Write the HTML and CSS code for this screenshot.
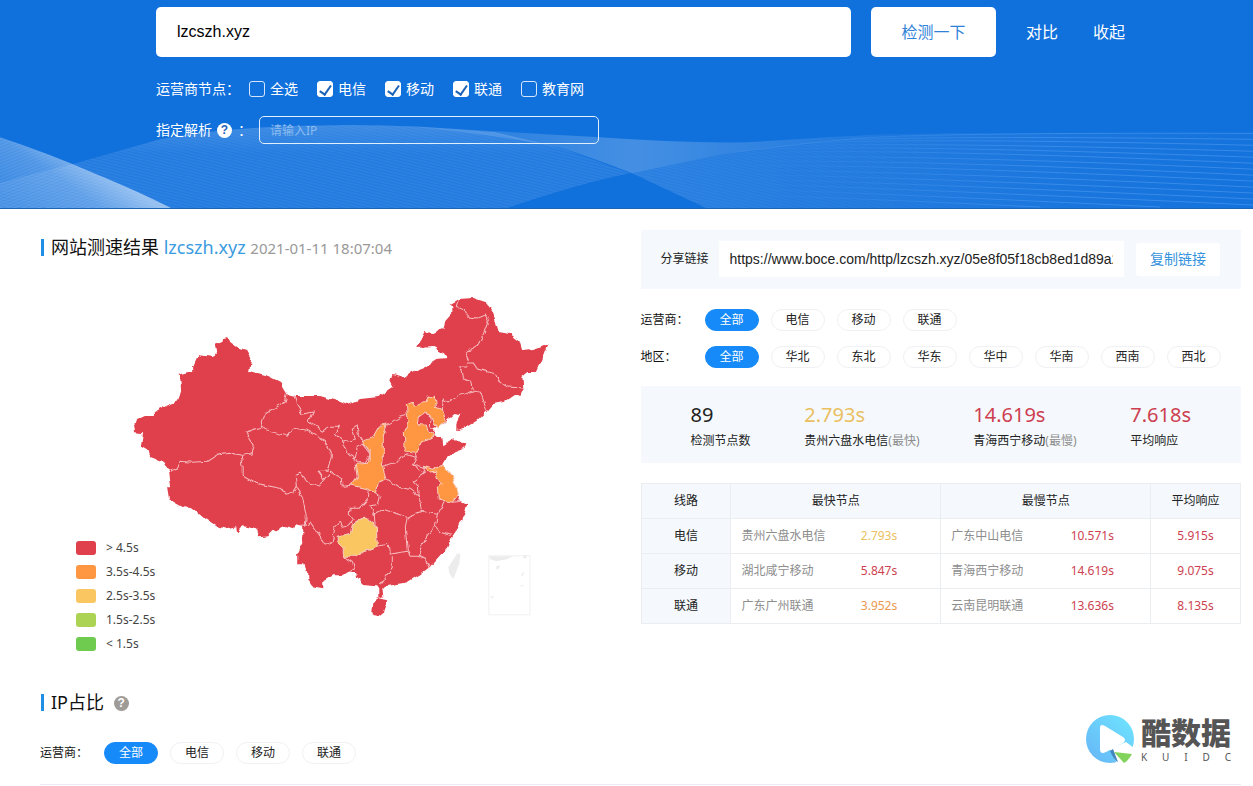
FILE: index.html
```html
<!DOCTYPE html>
<html lang="zh-CN">
<head>
<meta charset="utf-8">
<meta name="viewport" content="width=device-width, initial-scale=1">
<title>网站测速结果</title>
<link rel="stylesheet" href="styles.css">
</head>
<body>
<header class="hero">
  <svg class="waves" viewBox="0 0 1253 209" preserveAspectRatio="none" aria-hidden="true">
    <defs>
      <pattern id="fine" width="5" height="3" patternUnits="userSpaceOnUse" patternTransform="rotate(14)"><path d="M0 1H5" stroke="#8cc0ff" stroke-opacity=".2"/></pattern>
      <pattern id="steep" width="5" height="3" patternUnits="userSpaceOnUse" patternTransform="rotate(-22)"><path d="M0 1H5" stroke="#b9d8ff" stroke-opacity=".22"/></pattern>
      <linearGradient id="edge" x1="50" y1="230" x2="94" y2="165" gradientUnits="userSpaceOnUse"><stop offset="0" stop-color="#fff" stop-opacity=".14"/><stop offset=".6" stop-color="#fff" stop-opacity=".25"/><stop offset="1" stop-color="#fff" stop-opacity=".5"/></linearGradient>
      <linearGradient id="mid" x1="0" y1="125" x2="0" y2="209" gradientUnits="userSpaceOnUse"><stop offset="0" stop-color="#fff" stop-opacity=".18"/><stop offset=".35" stop-color="#fff" stop-opacity=".07"/><stop offset="1" stop-color="#fff" stop-opacity=".07"/></linearGradient>
      <linearGradient id="fold" x1="400" y1="0" x2="920" y2="0" gradientUnits="userSpaceOnUse"><stop offset="0" stop-color="#fff" stop-opacity=".06"/><stop offset=".45" stop-color="#fff" stop-opacity=".22"/><stop offset="1" stop-color="#fff" stop-opacity=".03"/></linearGradient>
      <linearGradient id="right" x1="640" y1="0" x2="1253" y2="0" gradientUnits="userSpaceOnUse"><stop offset="0" stop-color="#fff" stop-opacity=".1"/><stop offset="1" stop-color="#fff" stop-opacity=".02"/></linearGradient>
      <linearGradient id="fade" x1="640" y1="0" x2="1100" y2="0" gradientUnits="userSpaceOnUse"><stop offset="0" stop-color="#fff"/><stop offset="1" stop-color="#fff" stop-opacity="0"/></linearGradient>
      <linearGradient id="appear" x1="720" y1="0" x2="1050" y2="0" gradientUnits="userSpaceOnUse"><stop offset="0" stop-color="#fff" stop-opacity="0"/><stop offset="1" stop-color="#fff"/></linearGradient>
      <mask id="fadeMask"><rect width="1253" height="209" fill="url(#fade)"/></mask>
      <mask id="appearMask"><rect width="1253" height="209" fill="url(#appear)"/></mask>
    </defs>
    <path d="M0 184L32 175L72 165L160 140Q230 127 320 126Q400 124 495 133L560 148L630 174Q580 184 507 209H0Z" fill="url(#mid)"/>
    <path d="M0 184L32 175L72 165L160 140Q230 127 320 126Q400 124 495 133L560 148L630 174Q580 184 507 209H0Z" fill="url(#fine)"/>
    <path d="M400 126Q495 132 600 138Q680 144 746 143Q826 138 880 135L940 134Q826 140 722 155L632 174Q590 158 560 148Q490 134 400 126Z" fill="url(#fold)"/>
    <path d="M632 174L722 155Q830 138 946 134H1253V209H706Z" fill="url(#right)"/>
    <path d="M632 174L722 155Q830 138 946 134H1253V209H706Z" fill="url(#fine)" mask="url(#fadeMask)"/>
    <g fill="none" stroke="#4d9bf2" stroke-opacity=".6" mask="url(#appearMask)">
      <path d="M850 139Q950 133 1253 134"/><path d="M830 141Q950 136 1253 140"/><path d="M800 144Q930 138 1253 146"/>
      <path d="M780 147Q910 142 1253 152"/><path d="M760 150Q900 145 1253 158"/><path d="M740 154Q890 148 1253 164"/>
      <path d="M710 159Q880 153 1253 170"/><path d="M700 163Q870 158 1253 176"/><path d="M695 167Q860 163 1253 182"/>
      <path d="M690 171Q850 169 1253 188"/><path d="M690 175Q850 175 1253 194"/><path d="M690 179Q850 181 1253 200"/>
      <path d="M690 183Q850 187 1253 206"/><path d="M695 188Q850 193 1160 208"/><path d="M700 194Q850 199 1040 208"/>
    </g>
    <path d="M0 138Q48 154 94 174Q140 193 171 209H0Z" fill="url(#edge)"/>
    <path d="M0 138Q48 154 94 174Q140 193 171 209H0Z" fill="url(#steep)"/>
  </svg>
  <form class="search">
    <div class="search-row">
      <input class="domain" type="text" value="lzcszh.xyz" aria-label="域名">
      <button class="detect" type="button">检测一下</button>
      <a class="hero-link" href="#">对比</a>
      <a class="hero-link" href="#">收起</a>
    </div>
    <fieldset class="nodes" aria-labelledby="nodes-label">
      <span id="nodes-label" class="nodes-label">运营商节点：</span>
      <label class="check"><input type="checkbox">全选</label>
      <label class="check"><input type="checkbox" checked>电信</label>
      <label class="check"><input type="checkbox" checked>移动</label>
      <label class="check"><input type="checkbox" checked>联通</label>
      <label class="check"><input type="checkbox">教育网</label>
    </fieldset>
    <div class="resolve">
      <label for="ip">指定解析</label>
      <span class="help help-light">?</span>
      <span class="colon">：</span>
      <input id="ip" class="ip" type="text" placeholder="请输入IP">
    </div>
  </form>
</header>

<main class="main">
  <div class="columns">
    <section class="result">
      <h2 class="title">网站测速结果 <span class="site">lzcszh.xyz</span> <time class="time">2021-01-11 18:07:04</time></h2>
      <div class="map-area">
        <svg class="map" viewBox="40 270 600 387" role="img" aria-label="全国测速地图">
          <defs><filter id="rough" x="-5%" y="-5%" width="110%" height="110%"><feTurbulence type="fractalNoise" baseFrequency=".16" numOctaves="1" seed="4" result="n"/><feDisplacementMap in="SourceGraphic" in2="n" scale="6" xChannelSelector="R" yChannelSelector="G"/></filter></defs>
          <g filter="url(#rough)">
            <path class="land" d="M134 427L136 421L147 416L153 417L155 413L166 407L178 402L181 392L180 377L177 376L188 373L193 373L193 367L198 356L213 358L216 354L215 346L222 343L223 339L228 338L230 343L237 348L246 351L251 360L249 372L268 377L280 383L287 395L295 397L320 397L340 403L347 406L360 400L378 398L393 388L390 382L392 375L405 378L412 373L425 368L436 361L447 360L443 353L433 348L417 349L425 332L432 334L443 329L445 322L453 313L453 307L449 305L458 300L473 299L485 303L493 314L498 333L510 335L519 342L522 352L533 351L547 345L542 358L535 373L527 373L522 377L523 390L520 397L515 395L503 403L493 405L487 412L477 422L465 429L456 432L456 425L461 415L455 414L443 425L433 429L433 436L442 440L443 446L454 439L458 443L465 444L463 449L455 452L445 460L442 465L445 468L451 475L455 487L459 495L458 501L467 505L465 513L462 520L457 530L451 538L447 548L438 558L429 568L420 575L407 583L385 587L382 589L383 598L379 599L379 590L377 587L365 586L357 578L356 574L348 572L342 576L333 576L323 582L323 589L312 587L307 580L307 573L304 565L297 565L297 555L303 543L303 528L295 525L293 530L283 527L273 532L268 537L259 538L257 530L243 527L237 534L236 528L227 530L217 527L203 518L192 509L183 508L169 500L167 488L171 488L169 472L163 462L150 457L148 450L141 446L143 434L135 433Z"/>
            <path class="land" d="M372 603L378 599L387 601L383 612L377 617L371 615Z"/>
            <path class="slow" d="M362 442L373 438L380 426L387 425L383 437L383 460L382 467L386 480L378 483L376 494L368 490L351 486L357 478L355 465L368 464L370 453Z"/>
            <path class="slow" d="M407 416L406 405L412 402L414 407L425 403L427 397L435 398L436 407L442 410L445 422L438 429L435 425L430 418L425 413L418 418L417 425L425 426L427 433L432 435L432 438L422 443L416 454L405 453L404 433L409 423Z"/>
            <path class="slow" d="M423 467L430 473L435 472L437 479L442 485L437 488L438 500L452 503L459 494L455 487L451 475L445 468L442 466L433 470Z"/>
            <path class="medium" d="M337 537L350 534L352 525L365 518L370 523L376 527L377 547L363 552L355 557L343 557L343 548L337 542Z"/>
            <g class="border">
              <path d="M287 395L285 402L277 407L265 415L260 428L246 433L253 445L251 455L242 456"/>
              <path d="M241 456L228 453L218 455L207 462L192 463L180 462L175 470L170 472"/>
              <path d="M241 456L243 468L243 477L255 484L280 489L286 495L293 493L296 488L302 497L306 517L305 527L301 527"/>
              <path d="M305 527L310 523L320 537L325 546L332 543L335 528L340 523L343 528L347 527L353 520"/>
              <path d="M260 428L273 433L287 437L293 429L307 431L325 442L331 453L331 457L327 472L318 472L324 480L320 487L307 483L300 473L295 475L296 488M324 480L330 473L342 480L343 487L351 486"/>
              <path d="M294 397L297 407L302 415L313 413L309 422L322 432L330 427L340 427L335 435L343 443L355 440L352 430L357 427L358 435L362 442"/>
              <path d="M343 443L348 455L355 460L357 447L362 445L370 455L365 464L357 463L355 460"/>
              <path d="M387 425L400 418L407 416M383 468L397 463L404 455M416 454L417 458L413 465L423 468M417 458L404 455"/>
              <path d="M442 410L443 400L448 403L458 397L472 392L480 393L487 412M472 390L470 382L463 380L462 372L459 367L467 367L467 364L473 364L477 370L495 375L498 381L507 388L523 389"/>
              <path d="M458 300L456 307L463 310L468 318L478 319L485 316L488 322L483 335L478 345L464 353L468 362"/>
              <path d="M386 480L398 488L410 490L419 497L418 487L413 482L425 473L417 470L413 465M425 473L423 467"/>
              <path d="M419 497L421 512L437 515L444 502M376 494L380 498L378 505L370 507L374 515L383 510L407 518L421 512"/>
              <path d="M368 490L367 500L360 508L350 508L349 515L353 520M374 515L375 528"/>
              <path d="M407 518L405 528L407 552L410 557L419 557L425 540L435 527L437 515M377 547L388 545L389 555L407 552"/>
              <path d="M435 527L440 533L450 536M419 557L425 560L429 569M392 557L392 568L380 585M343 557L352 563L354 568L348 572"/>
              <path d="M425 413L430 418L429 426L433 431M452 503L460 502"/>
            </g>
          </g>
          <path class="island" d="M457 554L460 555L459 564L453 580L449 574L448 568Z"/>
          <rect class="inset" x="488.500" y="556.500" width="41" height="59"/>
          <path class="island" d="M489 557H513L506 560L496 562L490 560ZM496 567L500 566L498 570L496 570ZM523 556H526V559H523ZM521 575L524 572L522 578ZM520 586H523V587H520ZM491 597H493V599H491Z"/>
        </svg>
        <ul class="legend">
          <li><i class="swatch s1"></i>&gt; 4.5s</li>
          <li><i class="swatch s2"></i>3.5s-4.5s</li>
          <li><i class="swatch s3"></i>2.5s-3.5s</li>
          <li><i class="swatch s4"></i>1.5s-2.5s</li>
          <li><i class="swatch s5"></i>&lt; 1.5s</li>
        </ul>
      </div>
    </section>

    <section class="details">
      <div class="share">
        <label for="link">分享链接</label>
        <input id="link" class="link" type="text" readonly value="https://www.boce.com/http/lzcszh.xyz/05e8f05f18cb8ed1d89a2c41">
        <button class="copy" type="button">复制链接</button>
      </div>
      <div class="filters">
        <div class="filter"><span class="filter-label">运营商：</span><button class="pill on" type="button">全部</button><button class="pill" type="button">电信</button><button class="pill" type="button">移动</button><button class="pill" type="button">联通</button></div>
        <div class="filter"><span class="filter-label">地区：</span><button class="pill on" type="button">全部</button><button class="pill" type="button">华北</button><button class="pill" type="button">东北</button><button class="pill" type="button">华东</button><button class="pill" type="button">华中</button><button class="pill" type="button">华南</button><button class="pill" type="button">西南</button><button class="pill" type="button">西北</button></div>
      </div>
      <div class="stats">
        <div class="stat"><strong>89</strong><span>检测节点数</span></div>
        <div class="stat"><strong class="yellow">2.793s</strong><span>贵州六盘水电信<em>(最快)</em></span></div>
        <div class="stat"><strong class="red">14.619s</strong><span>青海西宁移动<em>(最慢)</em></span></div>
        <div class="stat"><strong class="red">7.618s</strong><span>平均响应</span></div>
      </div>
      <table class="lines">
        <colgroup><col class="c-line"><col class="c-name"><col class="c-time"><col class="c-name"><col class="c-time"><col class="c-avg"></colgroup>
        <thead><tr><th>线路</th><th colspan="2">最快节点</th><th colspan="2">最慢节点</th><th>平均响应</th></tr></thead>
        <tbody>
          <tr><th>电信</th><td class="name">贵州六盘水电信</td><td class="val yellow">2.793s</td><td class="name">广东中山电信</td><td class="val red">10.571s</td><td class="avg red">5.915s</td></tr>
          <tr><th>移动</th><td class="name">湖北咸宁移动</td><td class="val red">5.847s</td><td class="name">青海西宁移动</td><td class="val red">14.619s</td><td class="avg red">9.075s</td></tr>
          <tr><th>联通</th><td class="name">广东广州联通</td><td class="val orange">3.952s</td><td class="name">云南昆明联通</td><td class="val red">13.636s</td><td class="avg red">8.135s</td></tr>
        </tbody>
      </table>
    </section>
  </div>

  <section class="ratio">
    <h2 class="title">IP占比 <span class="help help-gray">?</span></h2>
    <div class="filter"><span class="filter-label">运营商：</span><button class="pill on" type="button">全部</button><button class="pill" type="button">电信</button><button class="pill" type="button">移动</button><button class="pill" type="button">联通</button></div>
    <div class="brand">
      <svg class="brand-mark" viewBox="0 0 48 48" aria-hidden="true">
        <defs><linearGradient id="sky" x1="0" x2="1" y1="1" y2="0"><stop offset="0" stop-color="#66b4f6"/><stop offset="1" stop-color="#6fe6ff"/></linearGradient></defs>
        <circle cx="24" cy="24" r="24" fill="url(#sky)"/>
        <path d="M24 34L40 27L48 33V48H31Z" fill="#fff"/>
        <path d="M14 13Q14 8 19 11L37 22Q41 25 37 28L20 37Q14 40 14 34Z" fill="#fff"/>
        <path d="M24 36L27 34L32 47Q28 45 24 36Z" fill="#4485bd"/>
        <path d="M28 37L46 39Q42 46 38 48Z" fill="#82d35b"/>
      </svg>
      <div class="brand-text"><b>酷数据</b><span class="brand-sub"><i>K</i><i>U</i><i>I</i><i>D</i><i>C</i></span></div>
    </div>
  </section>
</main>
</body>
</html>
```
FILE: styles.css
```css
* { box-sizing: border-box; }
body {
  margin: 0;
  background: #fff;
  color: #222;
  font: 12px/20px "Noto Sans", "Noto Sans CJK SC", sans-serif;
}
button, input { font: inherit; margin: 0; }
button { cursor: pointer; }
a { text-decoration: none; }
em, i { font-style: normal; }

.hero {
  position: relative;
  padding: 7px 128px 64px 156px;
  background: #1070dc;
  color: #fff;
  border-bottom: 1px solid #1d66b4;
}
.waves { position: absolute; inset: 0; width: 100%; height: 100%; }
.search { position: relative; font-size: 14px; }
.search-row { display: flex; align-items: center; }
.domain {
  flex: 1;
  min-width: 0;
  height: 50px;
  padding: 0 21px;
  border: 0;
  border-radius: 5px;
  background: #fff;
  color: #000;
  font: 16px "Liberation Sans", sans-serif;
}
.detect {
  width: 125px;
  height: 50px;
  margin-left: 20px;
  padding: 0;
  border: 0;
  border-radius: 5px;
  background: #fff;
  color: #2f82d8;
  font-size: 16px;
}
.hero-link { margin-left: 30px; color: #fff; font-size: 16px; }
.hero-link + .hero-link { margin-left: 35px; }
.nodes {
  display: flex;
  align-items: center;
  gap: 19px;
  margin: 22px 0 0;
  padding: 0;
  border: 0;
}
.nodes-label { margin-right: -10px; }
.check { display: flex; align-items: center; gap: 5px; }
.check input {
  appearance: none;
  width: 16px;
  height: 16px;
  border: 1px solid #d5e6fa;
  border-radius: 3px;
  display: grid;
  place-items: center;
}
.check input:checked { background: #fff; border-color: #fff; }
.check input:checked::after {
  content: "";
  width: 5px;
  height: 10px;
  border: solid #1c62b8;
  border-width: 0 2px 2px 0;
  transform: rotate(35deg);
}
.resolve { display: flex; align-items: center; margin-top: 17px; }
.help {
  display: inline-grid;
  place-items: center;
  width: 15px;
  height: 15px;
  border-radius: 50%;
  font: bold 12px/15px "Liberation Sans", sans-serif;
}
.help-light { margin-left: 5px; background: #fff; color: #1c62b8; }
.help-gray { margin-left: 5px; background: #9f9b97; color: #fff; vertical-align: 2px; }
.colon { width: 14px; margin: 0 7px 0 6px; }
.ip {
  width: 340px;
  height: 28px;
  padding: 0 10px;
  border: 1px solid #e3eefb;
  border-radius: 5px;
  background: transparent;
  color: #fff;
  font-size: 12px;
}
.ip::placeholder { color: #8bbcf0; }

.main { padding: 21px 12px 0 40px; }
.columns { display: grid; grid-template-columns: 1fr 1fr; }
.title {
  margin: 0;
  padding-left: 11px;
  font-size: 18px;
  font-weight: 400;
  line-height: 34px;
  color: #111;
  background: linear-gradient(#1f8fe6, #1f8fe6) 1px 50% / 3px 17px no-repeat;
}
.site { color: #3a9bdf; }
.time { color: #999; font-size: 15px; }
.map-area { display: grid; margin-top: 4px; }
.map { grid-area: 1 / 1; display: block; width: 100%; }
.land { fill: #e0404c; }
.slow { fill: #fe9642; }
.medium { fill: #f9c662; }
.slow, .medium { stroke: #f8cfc0; stroke-width: 1; }
.border { fill: none; stroke: #f6bdc0; stroke-width: 1; }
.island { fill: #ececec; }
.inset { fill: none; stroke: #f1f1f1; }
.legend {
  grid-area: 1 / 1;
  align-self: end;
  justify-self: start;
  margin: 0 0 0 36px;
  padding: 0;
  list-style: none;
  color: #444;
}
.legend li { display: flex; align-items: center; gap: 10px; height: 24px; }
.swatch { width: 20px; height: 14px; border-radius: 3px; }
.s1 { background: #e0404c; }
.s2 { background: #fe9642; }
.s3 { background: #f9c662; }
.s4 { background: #acd354; }
.s5 { background: #6ecb4f; }

.share {
  display: flex;
  align-items: center;
  padding: 11px 21px 12px 20px;
  background: #f5f9fd;
}
.link {
  flex: 1;
  min-width: 0;
  height: 36px;
  margin: 0 12px 0 10px;
  padding: 0 11px;
  border: 0;
  background: #fff;
  color: #222;
  font: 14px "Liberation Sans", sans-serif;
}
.copy {
  width: 84px;
  height: 33px;
  padding: 0;
  border: 0;
  border-radius: 3px;
  background: #fff;
  color: #3592dc;
  font-size: 14px;
}
.filters { display: grid; gap: 15px; margin: 20px 0 18px; }
.filter { display: flex; align-items: center; gap: 12px; }
.filter-label { width: 52px; color: #111; white-space: nowrap; }
.pill {
  width: 54px;
  height: 22px;
  padding: 0;
  border: 1px solid #eff1f4;
  border-radius: 11px;
  background: #fff;
  color: #222;
  line-height: 20px;
}
.pill.on { background: #168af8; border-color: #168af8; color: #fff; }
.stats {
  display: flex;
  justify-content: space-between;
  padding: 13px 50px 12px;
  background: #f5f9fd;
}
.stat strong, .stat span { display: block; }
.stat strong { font-size: 20px; font-weight: 400; line-height: 32px; }
.stat em { color: #8d8d8d; }
.stats .yellow, .lines .yellow { color: #eabf62; }
.stats .red, .lines .red { color: #cd3f50; }
.lines .orange { color: #ea9850; }
.lines {
  width: 100%;
  margin-top: 20px;
  border-collapse: collapse;
  table-layout: fixed;
}
.lines th, .lines td { height: 35px; padding: 0; border: 1px solid #eaeef1; font-weight: 400; text-align: center; }
.lines th { background: #f5f9fd; }
.lines .name { padding-left: 10px; border-right: 0; color: #8d8d8d; text-align: left; }
.lines .val { padding-left: 10px; border-left: 0; text-align: left; }
.c-line, .c-time, .c-avg { width: 15%; }
.c-name { width: 20%; }

.ratio {
  position: relative;
  margin-top: 29px;
  padding-bottom: 20px;
  border-bottom: 1px solid #ececf4;
}
.ratio .filter { margin-top: 23px; }
.brand { position: absolute; right: 10px; top: 30px; display: flex; gap: 7px; }
.brand-mark { width: 48px; height: 48px; }
.brand-text { color: #555; }
.brand-text b { display: block; font-size: 30px; font-weight: 900; line-height: 36px; }
.brand-sub { display: flex; justify-content: space-between; font-size: 10px; line-height: 12px; }
```
